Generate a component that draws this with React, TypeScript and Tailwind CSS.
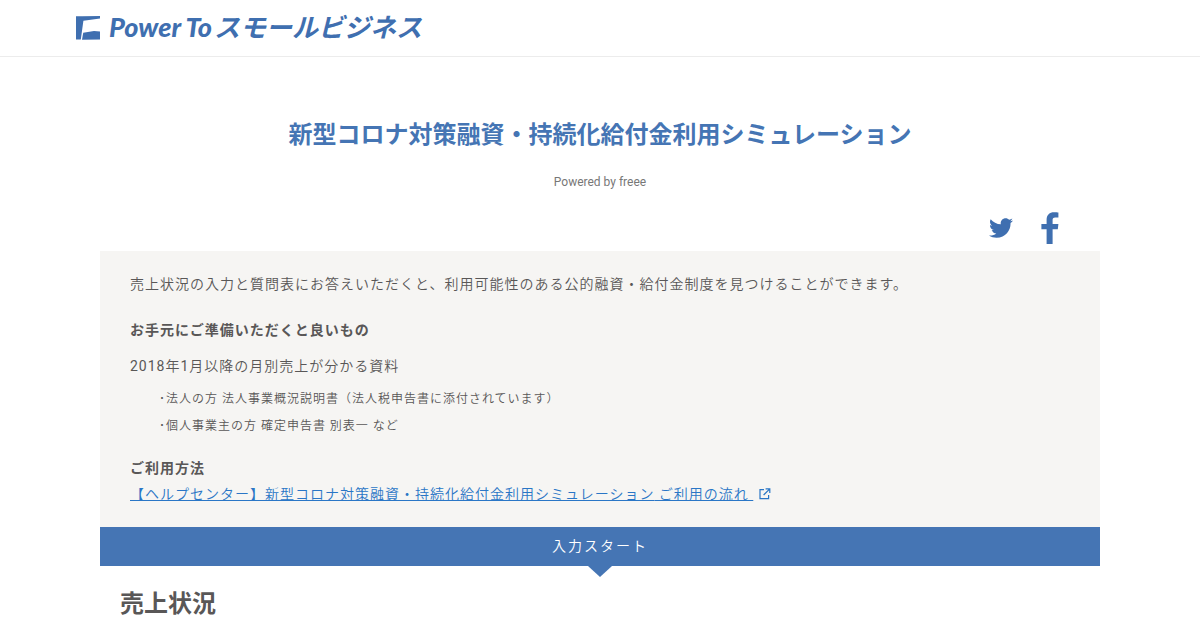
import {FaTwitter} from 'react-icons/fa';

const TITLE = '新型コロナ対策融資・持続化給付金利用シミュレーション';

const DOCUMENTS = [
  '法人の方 法人事業概況説明書（法人税申告書に添付されています）',
  '個人事業主の方 確定申告書 別表一 など',
];

const LogoMark = () => (
  <svg viewBox="0 0 24 24" className="w-6 h-6" fill="currentColor" aria-hidden="true">
    <path d="M0 0.3H6L24 0V2.6L7.4 4.8L4.8 23.6H0Z" />
    <path d="M7.2 16.8L18 15L24 15.4V23.4L6 23.8Z" />
  </svg>
);

const FacebookIcon = () => (
  <svg viewBox="0 0 18 32" className="w-[18px] h-8" fill="currentColor" aria-hidden="true">
    <path d="M17.4 0.4V5.4H14.2C12.2 5.4 11.6 6.5 11.6 8V12H17.4L16.8 17.2H11.6V32H5.6V17.2H0.4V12H5.6V7.6C5.6 2.8 8.6 0.2 13 0.2C15 0.2 16.6 0.3 17.4 0.4Z" />
  </svg>
);

const ExternalLinkIcon = () => (
  <svg viewBox="0 0 12 12" className="w-3 h-3" fill="none" stroke="currentColor" strokeWidth="1.2" aria-hidden="true">
    <path d="M5 1.6H1V10.6H9.6V7" />
    <path d="M6.6 0.8H10.8V5M10.8 0.8L4.6 7" />
  </svg>
);

const Header = () => (
  <header className="h-[57px] border-b border-[#ececec] px-[76px] flex items-center">
    <a href="#" className="flex items-center text-[#3f6fb0] whitespace-nowrap">
      <LogoMark />
      <span className="ml-[9px] pb-1 flex items-baseline gap-[2px] italic leading-8">
        <span className="font-['Lato'] text-[27px] font-black">Power To</span>
        <span className="font-['Noto_Sans_CJK_JP',sans-serif] text-[26px] font-bold">スモールビジネス</span>
      </span>
    </a>
  </header>
);

const ShareLinks = () => (
  <div className="mt-[21px] pr-[41px] pb-[7px] flex items-center justify-end gap-7 text-[#3f6fb0]">
    <a href="#" aria-label="Twitter">
      <FaTwitter className="w-6 h-6" />
    </a>
    <a href="#" aria-label="Facebook">
      <FacebookIcon />
    </a>
  </div>
);

const Guide = () => (
  <section className="bg-[#f6f5f3] px-[30px] py-[21px] text-sm leading-6 tracking-[1px] font-[350]">
    <p>売上状況の入力と質問表にお答えいただくと、利用可能性のある公的融資・給付金制度を見つけることができます。</p>
    <h2 className="mt-[22px] font-bold">お手元にご準備いただくと良いもの</h2>
    <p className="mt-3">
      <span className="font-normal">2018</span>年<span className="font-normal">1</span>月以降の月別売上が分かる資料
    </p>
    <ul className="mt-2 pl-[29px] text-xs leading-[27px]">
      {DOCUMENTS.map((text) => (
        <li key={text}>･{text}</li>
      ))}
    </ul>
    <h2 className="mt-4 font-bold">ご利用方法</h2>
    <p className="mt-[2px] flex items-center gap-[6px] text-[#2a76c6]">
      <a href="#" className="underline whitespace-pre">【ヘルプセンター】{TITLE} ご利用の流れ </a>
      <ExternalLinkIcon />
    </p>
  </section>
);

export default function App() {
  return (
    <div className="bg-white text-[#595757] font-['Roboto','Noto_Sans_CJK_JP',sans-serif]" lang="ja">
      <Header />
      <main className="max-w-[1000px] mx-auto">
        <h1 className="mt-[60px] text-center text-2xl leading-9 font-bold text-[#4575b4]">{TITLE}</h1>
        <p className="mt-5 text-center text-xs leading-[18px] text-[#777777]">Powered by freee</p>
        <ShareLinks />
        <Guide />
        <div className="relative bg-[#4575b4] text-center text-sm leading-[39px] tracking-[2px] font-[350] text-white">
          入力スタート
          <span className="absolute top-full left-1/2 -translate-x-1/2 w-6 h-[11px] bg-[#4575b4] [clip-path:polygon(0_0,100%_0,50%_100%)]" />
        </div>
        <h2 className="mt-5 px-5 text-2xl leading-9 font-bold">売上状況</h2>
      </main>
    </div>
  );
}
